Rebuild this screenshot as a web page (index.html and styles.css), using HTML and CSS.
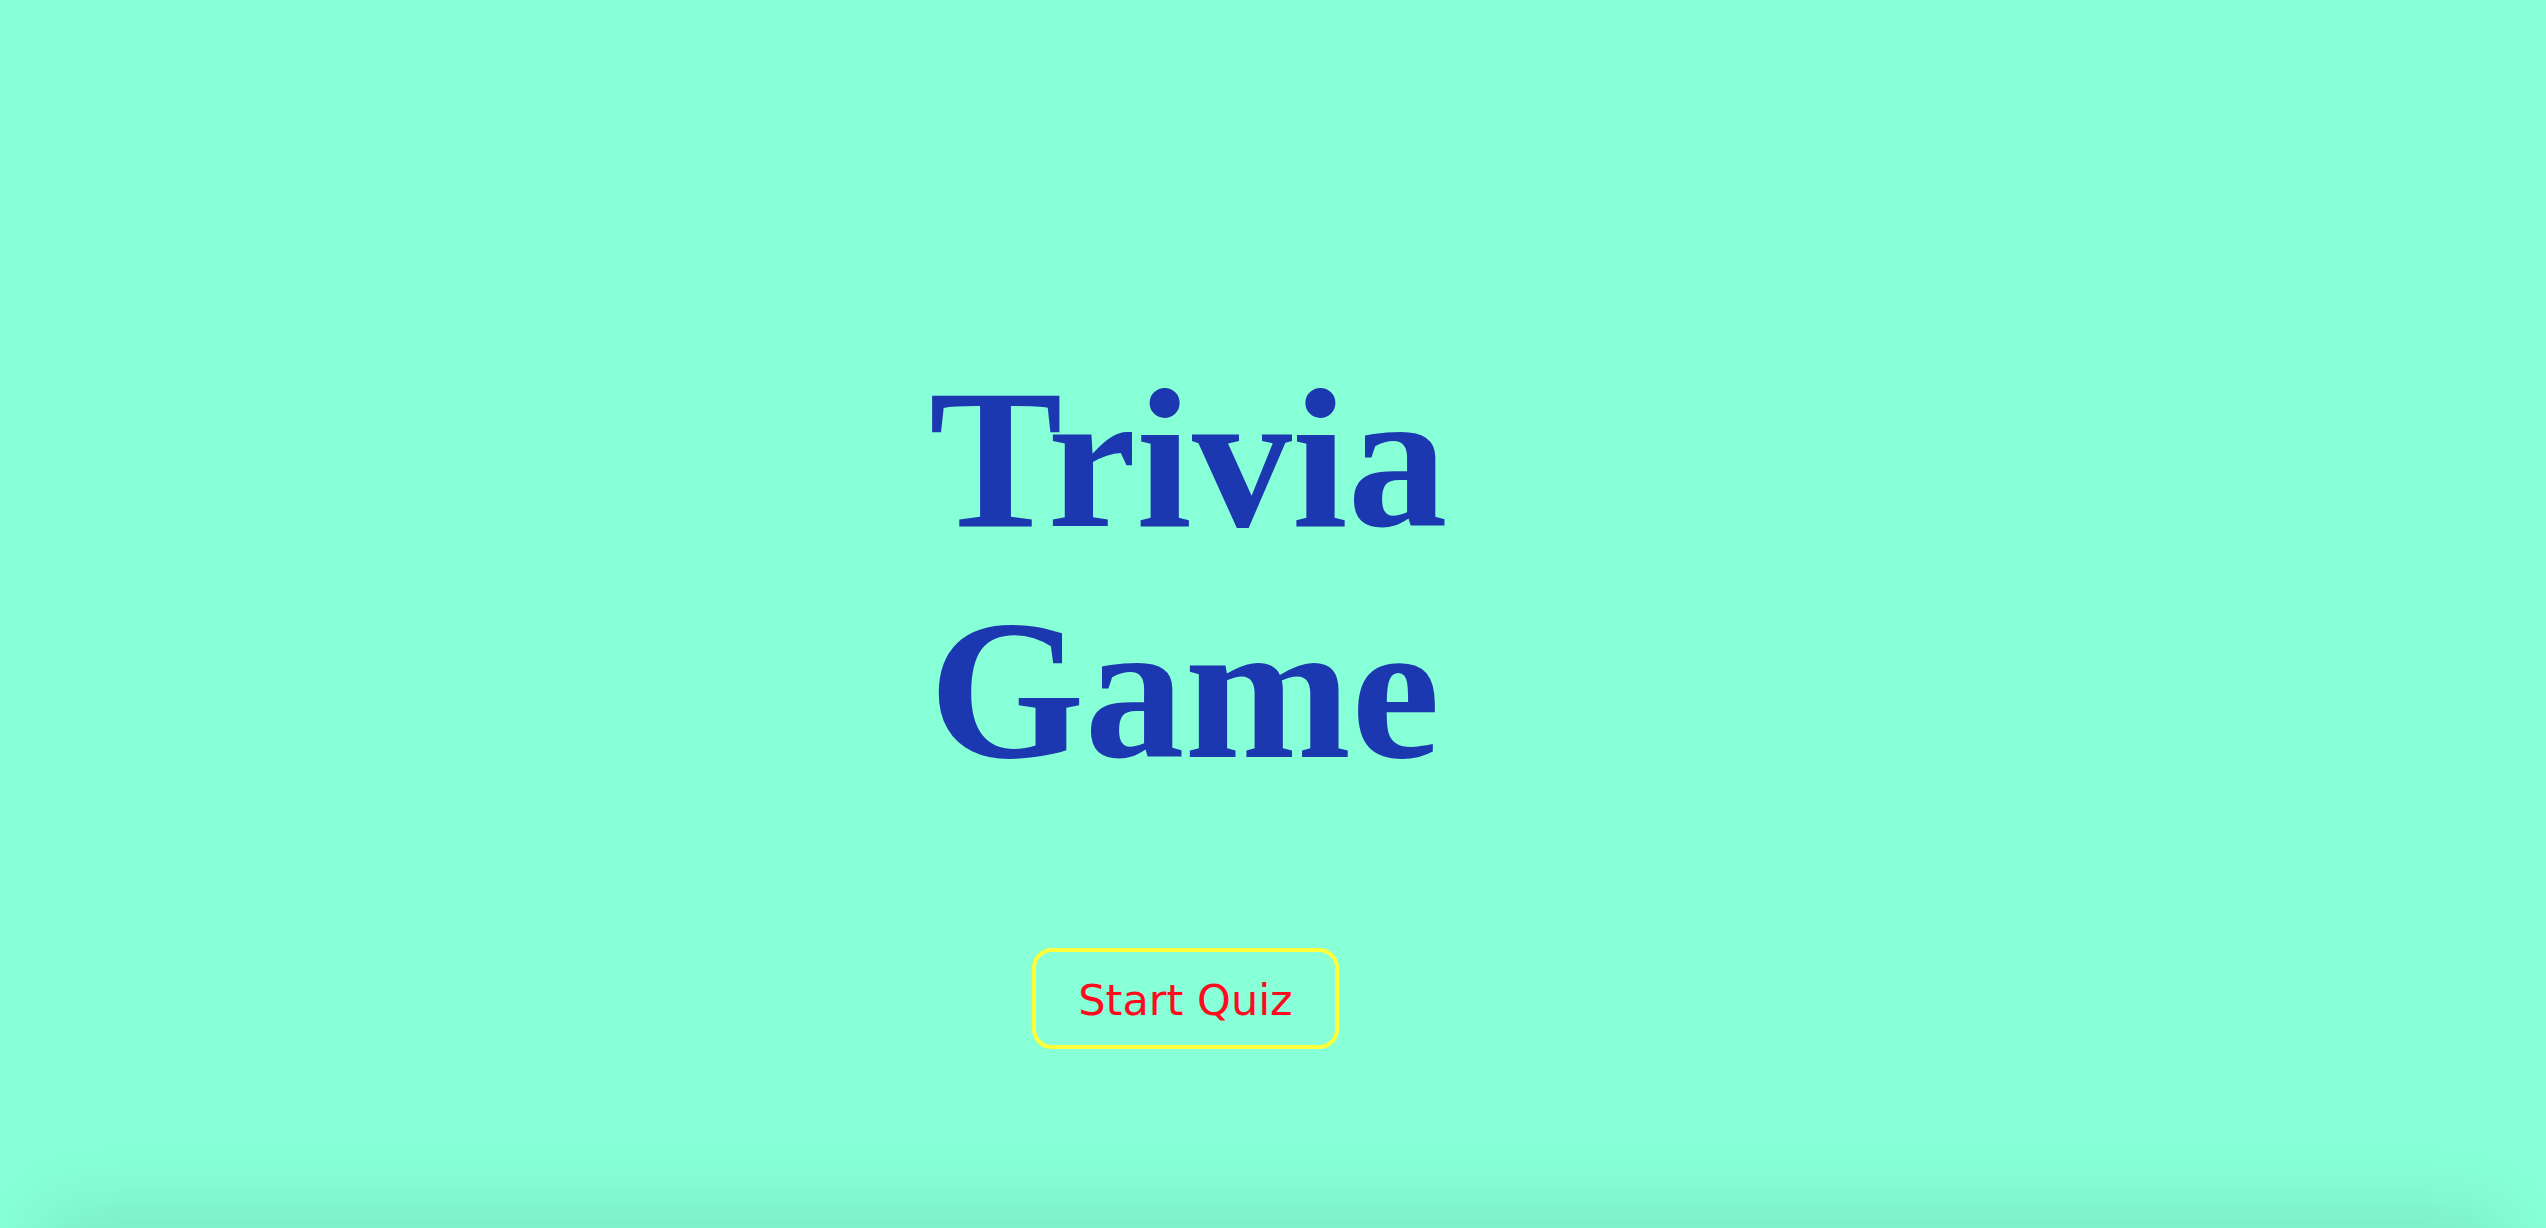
FILE: index.html
```html
<!DOCTYPE html>
<html lang="en">
<head>
<meta charset="utf-8">
<title>Trivia Game</title>
<link rel="stylesheet" href="styles.css">
</head>
<body>
<main class="home">
  <h1 class="title">Trivia Game</h1>
  <button class="start-btn" type="button">Start Quiz</button>
</main>
<div class="bottom-shade"></div>
</body>
</html>
```

FILE: styles.css
```css
html, body {
  margin: 0;
  padding: 0;
  height: 100%;
  overflow: hidden;
}

body {
  background: #87ffd7;
  font-family: "Liberation Serif", "Times New Roman", serif;
}

.home {
  padding: 343px 0 0 929px;
  display: flex;
  flex-direction: column;
  align-items: flex-start;
}

.title {
  width: 560px;
  margin: 0;
  font-family: "Liberation Serif", "Times New Roman", serif;
  font-weight: bold;
  font-size: 200px;
  line-height: 231px;
  color: #1c38b0;
  text-align: left;
}

.start-btn {
  margin: 143px 0 0 103px;
  box-sizing: border-box;
  width: 307px;
  height: 101px;
  padding: 2px 0 0 0;
  background: transparent;
  border: 4px solid #ffff3a;
  border-radius: 20px;
  font-family: "DejaVu Sans", Verdana, sans-serif;
  font-size: 43px;
  color: #ff0a1e;
  cursor: pointer;
}

.bottom-shade {
  position: fixed;
  left: 60px;
  right: 60px;
  top: 100%;
  height: 200px;
  box-shadow: 0 0 70px 10px rgba(0, 60, 30, 0.12);
  pointer-events: none;
}
```
